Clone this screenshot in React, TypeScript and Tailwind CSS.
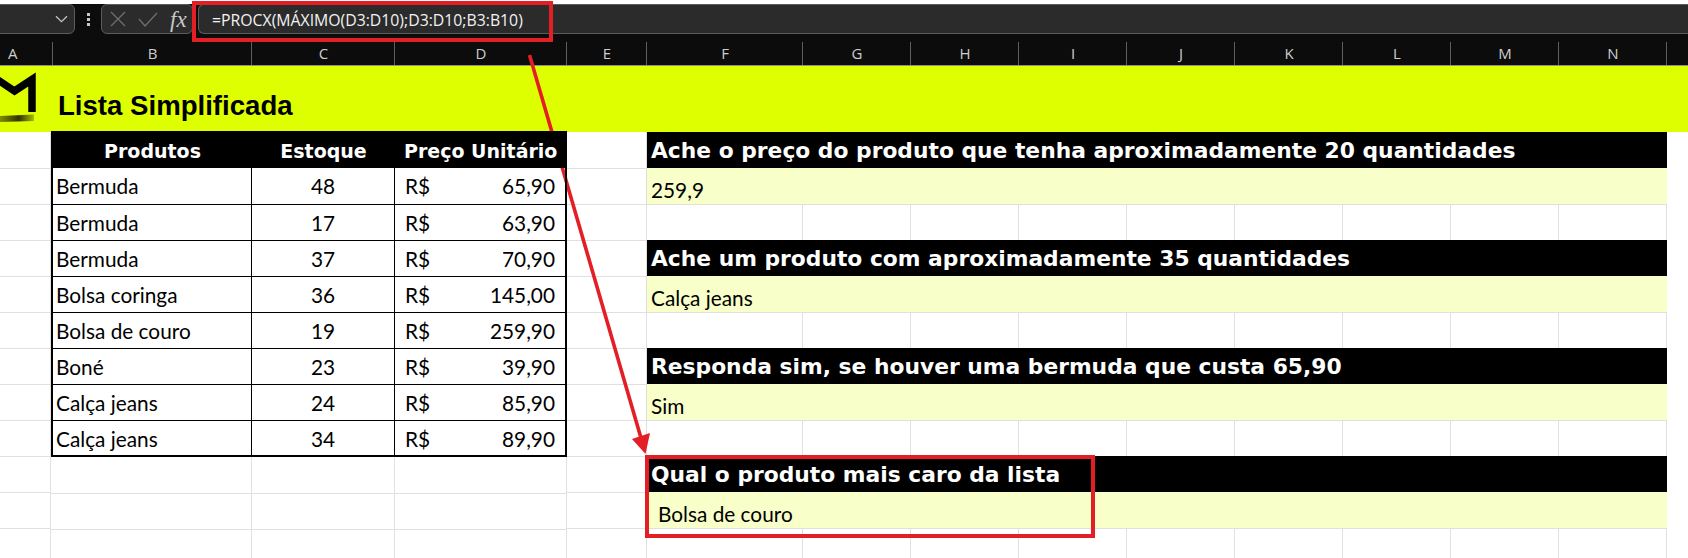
const columns = [
  { name: 'A', width: 'w-[53px]', align: 'justify-start pl-[8px]' },
  { name: 'B', width: 'w-[199px]', align: 'justify-center' },
  { name: 'C', width: 'w-[143px]', align: 'justify-center' },
  { name: 'D', width: 'w-[172px]', align: 'justify-center' },
  { name: 'E', width: 'w-[80px]', align: 'justify-center' },
  { name: 'F', width: 'w-[156px]', align: 'justify-center' },
  { name: 'G', width: 'w-[108px]', align: 'justify-center' },
  { name: 'H', width: 'w-[108px]', align: 'justify-center' },
  { name: 'I', width: 'w-[108px]', align: 'justify-center' },
  { name: 'J', width: 'w-[108px]', align: 'justify-center' },
  { name: 'K', width: 'w-[108px]', align: 'justify-center' },
  { name: 'L', width: 'w-[108px]', align: 'justify-center' },
  { name: 'M', width: 'w-[108px]', align: 'justify-center' },
  { name: 'N', width: 'w-[108px]', align: 'justify-center' },
];

const products = [
  { name: 'Bermuda', stock: 48, price: '65,90' },
  { name: 'Bermuda', stock: 17, price: '63,90' },
  { name: 'Bermuda', stock: 37, price: '70,90' },
  { name: 'Bolsa coringa', stock: 36, price: '145,00' },
  { name: 'Bolsa de couro', stock: 19, price: '259,90' },
  { name: 'Boné', stock: 23, price: '39,90' },
  { name: 'Calça jeans', stock: 24, price: '85,90' },
  { name: 'Calça jeans', stock: 34, price: '89,90' },
];

const questions = [
  { title: 'Ache o preço do produto que tenha aproximadamente 20 quantidades', answer: '259,9' },
  { title: 'Ache um produto com aproximadamente 35 quantidades', answer: 'Calça jeans' },
  { title: 'Responda sim, se houver uma bermuda que custa 65,90', answer: 'Sim' },
  { title: 'Qual o produto mais caro da lista', answer: 'Bolsa de couro', indent: true },
];

const sheetFont = "font-['Lato','Liberation_Sans',sans-serif]";
const headingFont = "font-['DejaVu_Sans','Liberation_Sans',sans-serif]";

function EmptyRows({ width, count, noFirstBorder }: { width: string; count: number; noFirstBorder?: boolean }) {
  return (
    <div className={`flex shrink-0 flex-col ${width}`}>
      {Array.from({ length: count }).map((_, i) => (
        <div
          key={i}
          className={`h-[36px] shrink-0 border-r border-[#e0e0e0] ${i === 0 && noFirstBorder ? '' : 'border-t'}`}
        />
      ))}
    </div>
  );
}

function BlankGridRow() {
  return (
    <div className="flex h-[36px]">
      {columns.slice(5).map((col) => (
        <div key={col.name} className={`h-full shrink-0 border-r border-t border-[#e0e0e0] ${col.width}`} />
      ))}
    </div>
  );
}

function Toolbar() {
  return (
    <div className="flex h-[30px] bg-[#0c0c0c]">
      <div className="ml-[-6px] flex h-[30px] w-[81px] items-center justify-end rounded-[6px] border border-[#5c5c5c] bg-[#2b2b2b] pr-[6px]">
        <svg width="13" height="8" viewBox="0 0 13 8" fill="none" stroke="#c4c4c4" strokeWidth="1.3">
          <path d="M1 1.2 6.5 6.6 12 1.2" />
        </svg>
      </div>
      <div className="flex w-[26px] flex-col items-center gap-[2px] pt-[9px]">
        <span className="h-[3px] w-[3px] bg-[#c8c8c8]" />
        <span className="h-[3px] w-[3px] bg-[#c8c8c8]" />
        <span className="h-[3px] w-[3px] bg-[#c8c8c8]" />
      </div>
      <div className="flex h-[30px] w-[92px] items-center rounded-[6px] border border-[#5c5c5c] bg-[#2b2b2b] pl-[8px]">
        <svg width="16" height="16" viewBox="0 0 16 16" fill="none" stroke="#6f6f6f" strokeWidth="1.3">
          <path d="M1 1 15 15M15 1 1 15" />
        </svg>
        <svg className="ml-[12px]" width="20" height="15" viewBox="0 0 20 15" fill="none" stroke="#6f6f6f" strokeWidth="1.3">
          <path d="M1 7 7 14 19 1" />
        </svg>
        <span className="ml-[12px] font-['Liberation_Serif',serif] text-[23px] leading-none text-[#c8c8c8] italic">fx</span>
      </div>
      <div className="ml-[5px] flex h-[30px] flex-1 items-center rounded-l-[6px] border border-r-0 border-[#5c5c5c] bg-[#2b2b2b] pt-[3px] pl-[13px]">
        <span className="font-['Open_Sans',sans-serif] text-[15.8px] text-[#f2f2f2]">=PROCX(MÁXIMO(D3:D10);D3:D10;B3:B10)</span>
      </div>
    </div>
  );
}

function ColumnHeaders() {
  return (
    <div className="flex h-[32px] border-b border-b-[#8d8d8d] bg-[#0c0c0c]">
      {columns.map((col) => (
        <div key={col.name} className={`relative flex shrink-0 items-end ${col.width} ${col.align}`}>
          <span className="font-['Open_Sans',sans-serif] text-[15px] leading-[23px] text-[#cfcfcf]">{col.name}</span>
          <span className="absolute right-0 bottom-0 h-[23px] w-px bg-[#5f5f5f]" />
        </div>
      ))}
    </div>
  );
}

function TitleBand() {
  return (
    <div className="flex h-[66px] items-center bg-[#ddff00] pl-[58px]">
      <svg className="absolute top-[66px] left-0" width="40" height="66" viewBox="0 0 40 66">
        <defs>
          <linearGradient id="swoosh" x1="0" y1="0" x2="1" y2="0">
            <stop offset="0" stopColor="#7f8c00" />
            <stop offset="0.55" stopColor="#2f3300" />
            <stop offset="1" stopColor="#a6bd00" />
          </linearGradient>
        </defs>
        <path d="M-2 14 14.5 25 32 13.5V46" fill="none" stroke="#000" strokeWidth="7.5" />
        <path d="M0 50 34 48.5V55L0 56Z" fill="url(#swoosh)" />
      </svg>
      <span className="mt-[14px] font-['Liberation_Sans',sans-serif] text-[27.6px] leading-none font-bold text-black">
        Lista Simplificada
      </span>
    </div>
  );
}

function ProductTable() {
  return (
    <div className={`relative z-10 -mt-px h-[326px] w-[516px] shrink-0 border-x-2 border-b-2 border-black ${sheetFont}`}>
      <div className={`flex h-[37px] items-center bg-black pt-[3px] text-[19px] font-bold text-white ${headingFont}`}>
        <div className="w-[199px] text-center">Produtos</div>
        <div className="w-[143px] text-center">Estoque</div>
        <div className="flex-1 pl-[9px] whitespace-nowrap">Preço Unitário</div>
      </div>
      {products.map((p, i) => (
        <div key={i} className={`flex h-[36px] items-center text-[20.8px] text-black ${i > 0 ? 'border-t border-black' : ''}`}>
          <div className="flex h-full w-[199px] items-center border-r border-black pl-[3px]">{p.name}</div>
          <div className="flex h-full w-[143px] items-center justify-center border-r border-black">{p.stock}</div>
          <div className="flex h-full flex-1 items-center justify-between pr-[10px] pl-[10px]">
            <span>R$</span>
            <span>{p.price}</span>
          </div>
        </div>
      ))}
    </div>
  );
}

function Question({ title, answer, indent }: { title: string; answer: string; indent?: boolean }) {
  return (
    <div className="w-[1020px]">
      <div className={`flex h-[36px] items-center bg-black pt-[3px] pl-[4px] text-[21.8px] font-bold whitespace-nowrap text-white ${headingFont}`}>
        {title}
      </div>
      <div className={`flex h-[36px] items-center bg-[#f8ffc9] pt-[8px] text-[20.8px] text-black ${sheetFont} ${indent ? 'pl-[11px]' : 'pl-[4px]'}`}>
        {answer}
      </div>
    </div>
  );
}

export default function App() {
  return (
    <div className="relative h-[558px] w-[1688px] overflow-hidden bg-white">
      <div className="h-[4px] bg-white" />
      <Toolbar />
      <ColumnHeaders />
      <TitleBand />
      <div className="flex">
        <EmptyRows width="w-[51px]" count={12} noFirstBorder />
        <div className="flex w-[516px] shrink-0 flex-col">
          <ProductTable />
          <div className="flex">
            <EmptyRows width="w-[201px]" count={3} noFirstBorder />
            <EmptyRows width="w-[143px]" count={3} noFirstBorder />
            <EmptyRows width="w-[172px]" count={3} noFirstBorder />
          </div>
        </div>
        <EmptyRows width="w-[80px]" count={12} noFirstBorder />
        <div className="flex w-[1020px] shrink-0 flex-col">
          {questions.map((q) => (
            <div key={q.title}>
              <Question title={q.title} answer={q.answer} indent={q.indent} />
              <BlankGridRow />
            </div>
          ))}
        </div>
      </div>

      {/* marcações vermelhas por cima da planilha */}
      <div className="absolute top-[1px] left-[192px] h-[41px] w-[361px] border-4 border-[#e41e25]" />
      <div className="absolute top-[455px] left-[645px] h-[83px] w-[450px] border-4 border-[#e41e25]" />
      <svg className="pointer-events-none absolute top-0 left-0" width="1688" height="558" viewBox="0 0 1688 558">
        <path d="M529.5 55 641 438" stroke="#e41e25" strokeWidth="3.6" fill="none" />
        <path d="M632 439 650 433 645.5 454Z" fill="#e41e25" />
      </svg>
    </div>
  );
}
